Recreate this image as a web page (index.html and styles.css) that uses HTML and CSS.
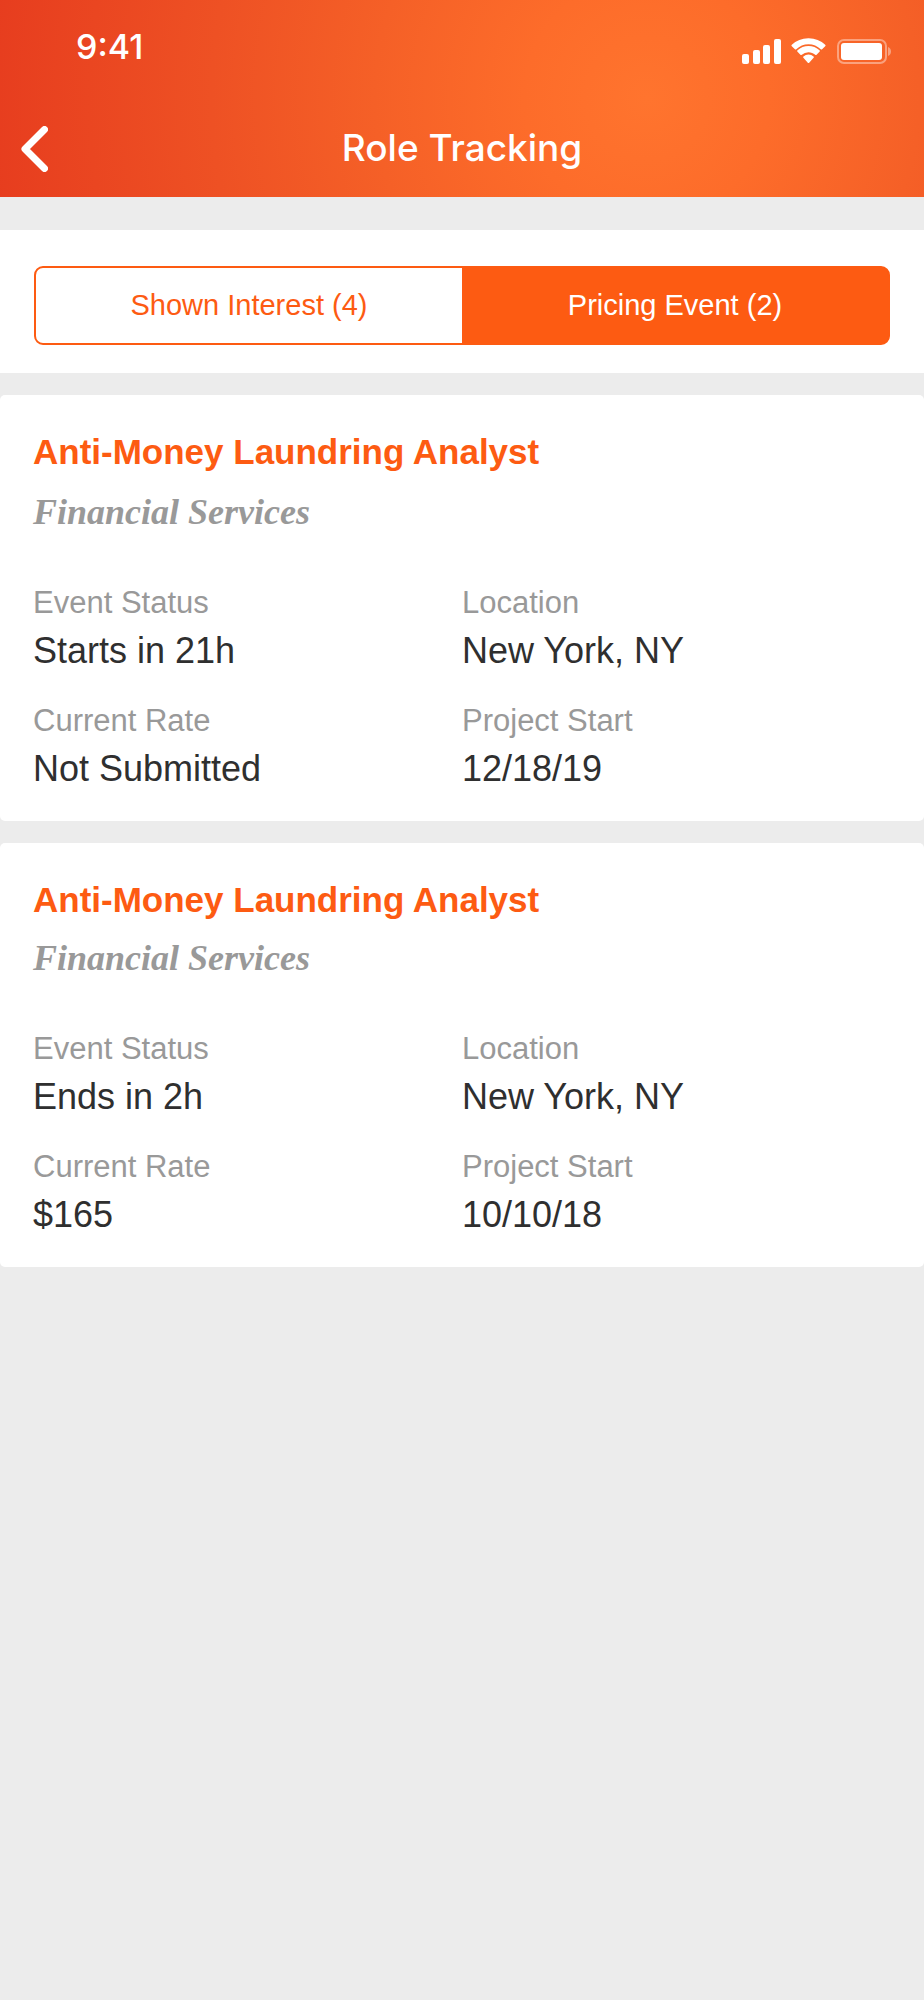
FILE: index.html
```html
<!DOCTYPE html>
<html lang="en">
<head>
  <meta charset="utf-8">
  <meta name="viewport" content="width=device-width, initial-scale=1">
  <title>Role Tracking</title>
  <link rel="stylesheet" href="styles.css">
</head>
<body>
  <header class="header">
    <div class="status-bar">
      <span class="clock">9:41</span>
      <svg class="status-icons" viewBox="0 0 150 26" aria-hidden="true">
        <g fill="#fff">
          <rect x="0" y="15" width="7" height="10" rx="2"/>
          <rect x="11" y="11" width="7" height="14" rx="2"/>
          <rect x="21" y="6" width="7" height="19" rx="2"/>
          <rect x="32" y="0" width="7" height="25" rx="2"/>
          <path d="M66.500 5.200c4.700 0 9 1.900 12.200 5a1 1 0 0 0 1.400 0l3.100-3a1 1 0 0 0 0-1.500A24 24 0 0 0 66.500-.8a24 24 0 0 0-16.700 6.500 1 1 0 0 0 0 1.500l3.100 3a1 1 0 0 0 1.400 0c3.200-3.100 7.500-5 12.200-5z"/>
          <path d="M66.500 13.200c2.500 0 4.900.9 6.700 2.500a1 1 0 0 0 1.400 0l2.900-2.900a1 1 0 0 0 0-1.500 16 16 0 0 0-22 0 1 1 0 0 0 0 1.500l2.900 2.900a1 1 0 0 0 1.400 0 10 10 0 0 1 6.700-2.500z"/>
          <path d="M71.600 18.800a1 1 0 0 0 0-1.400 8 8 0 0 0-10.200 0 1 1 0 0 0 0 1.400l4.400 4.900a1 1 0 0 0 1.400 0z"/>
          <rect x="99" y="4" width="41" height="17" rx="3"/>
          <path d="M146 8c2 .8 3 2.500 3 4.500s-1 3.700-3 4.500z" opacity=".4"/>
        </g>
        <rect x="96" y="1" width="48" height="23" rx="6" fill="none" stroke="#fff" stroke-width="2" opacity=".4"/>
      </svg>
    </div>
    <div class="nav">
      <button class="back" type="button" aria-label="Back">
        <svg class="back-icon" viewBox="0 0 28 46" aria-hidden="true">
          <path d="M24.500 3.500 5 23l19.500 19.500" fill="none" stroke="#fff" stroke-width="7" stroke-linecap="round" stroke-linejoin="round"/>
        </svg>
      </button>
      <h1 class="nav-title">Role Tracking</h1>
    </div>
  </header>

  <main class="content">
    <div class="tabs-panel">
      <div class="tabs">
        <button class="tab" type="button" aria-pressed="false">Shown Interest (4)</button>
        <button class="tab tab-active" type="button" aria-pressed="true">Pricing Event (2)</button>
      </div>
    </div>

    <article class="card">
      <h2 class="card-title">Anti-Money Laundring Analyst</h2>
      <p class="card-industry">Financial Services</p>
      <dl class="facts">
        <div class="fact"><dt class="label">Event Status</dt><dd class="value">Starts in 21h</dd></div>
        <div class="fact"><dt class="label">Location</dt><dd class="value">New York, NY</dd></div>
        <div class="fact"><dt class="label">Current Rate</dt><dd class="value">Not Submitted</dd></div>
        <div class="fact"><dt class="label">Project Start</dt><dd class="value">12/18/19</dd></div>
      </dl>
    </article>

    <article class="card card-compact">
      <h2 class="card-title">Anti-Money Laundring Analyst</h2>
      <p class="card-industry">Financial Services</p>
      <dl class="facts">
        <div class="fact"><dt class="label">Event Status</dt><dd class="value">Ends in 2h</dd></div>
        <div class="fact"><dt class="label">Location</dt><dd class="value">New York, NY</dd></div>
        <div class="fact"><dt class="label">Current Rate</dt><dd class="value">$165</dd></div>
        <div class="fact"><dt class="label">Project Start</dt><dd class="value">10/10/18</dd></div>
      </dl>
    </article>
  </main>
</body>
</html>
```
FILE: styles.css
```css
* {
  box-sizing: border-box;
  margin: 0;
  padding: 0;
}

body {
  background: #ececec;
  color: #2f2f2f;
  font-family: "Liberation Sans", Arial, sans-serif;
}

button {
  border: 0;
  background: none;
  font: inherit;
  cursor: pointer;
}

.header {
  background: radial-gradient(circle 680px at 70% 50%, #ff742e 0%, #fd6c2a 18%, #f56027 40%, #ee5124 64%, #e63b1e 100%);
  color: #fff;
  font-family: Inter, sans-serif;
}

.status-bar {
  display: flex;
  align-items: center;
  justify-content: space-between;
  padding: 27px 32px 29px 76px;
}

.clock {
  font-size: 34px;
  font-weight: 500;
  line-height: 40px;
}

.status-icons {
  width: 150px;
  height: 26px;
  margin-top: 10px;
  overflow: visible;
}

.nav {
  display: grid;
  grid-template-columns: 68px 1fr 68px;
  align-items: center;
  padding: 21px 0 18px;
}

.back {
  padding: 9px 20px 7px;
}

.back-icon {
  display: block;
  width: 28px;
  height: 46px;
}

.nav-title {
  font-size: 37px;
  font-weight: 500;
  line-height: 48px;
  text-align: center;
}

.content {
  display: flex;
  flex-direction: column;
  gap: 22px;
  padding-top: 33px;
}

.tabs-panel {
  padding: 36px 34px 28px;
  background: #fff;
}

.tabs {
  display: grid;
  grid-template-columns: 1fr 1fr;
  border: 2px solid #fd5b12;
  border-radius: 9px;
  background: #fd5b12;
}

.tab {
  padding: 20px 8px 21px;
  border-radius: 7px 0 0 7px;
  background: #fff;
  color: #fd5b12;
  font-size: 29px;
  line-height: 34px;
}

.tab-active {
  border-radius: 0 7px 7px 0;
  background: #fd5b12;
  color: #fff;
}

.card {
  padding: 36px 33px 27px;
  border-radius: 5px;
  background: #fff;
}

.card-title {
  color: #fd5b12;
  font-size: 35px;
  font-weight: 700;
  line-height: 42px;
}

.card-industry {
  margin-top: 19px;
  color: #999;
  font-family: "Liberation Serif", "Times New Roman", serif;
  font-size: 36px;
  font-style: italic;
  font-weight: 700;
  line-height: 40px;
}

.card-compact .card-industry {
  margin-top: 17px;
}

.facts {
  display: grid;
  grid-template-columns: 1fr 1fr;
  gap: 22px 0;
  margin-top: 48px;
}

.label {
  color: #999;
  font-size: 31px;
  line-height: 46px;
}

.value {
  font-size: 36px;
  line-height: 50px;
}
```
